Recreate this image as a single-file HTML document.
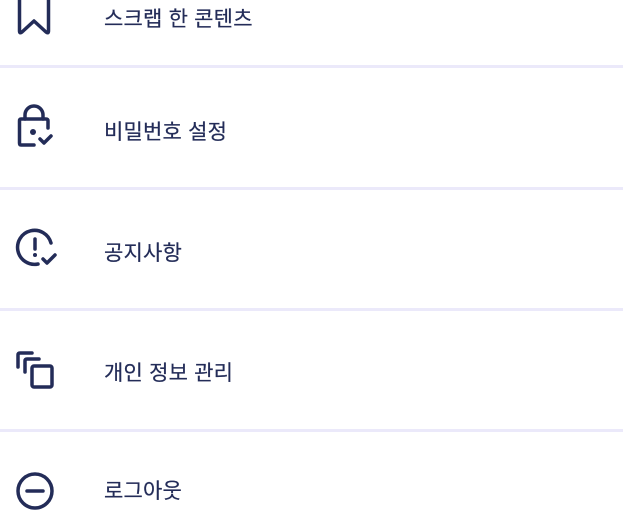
<html><head><style>
body{margin:0;width:623px;height:512px;background:#fff;position:relative;overflow:hidden;font-family:"Liberation Sans","Noto Sans CJK KR",sans-serif;color:#232c58}
.d{position:absolute;left:0;width:623px;height:3px;background:#ebe9fa}
.t{position:absolute;left:104px;font-size:21px;line-height:26px;letter-spacing:0.2px;-webkit-text-stroke:0.2px #232c58}
svg{position:absolute;left:0;top:0}
</style></head><body>
<div class="d" style="top:65px"></div>
<div class="d" style="top:187px"></div>
<div class="d" style="top:308px"></div>
<div class="d" style="top:429px"></div>
<div class="t" style="top:7px">스크랩 한 콘텐츠</div>
<div class="t" style="top:120px">비밀번호 설정</div>
<div class="t" style="top:241px">공지사항</div>
<div class="t" style="top:361px">개인 정보 관리</div>
<div class="t" style="top:479px">로그아웃</div>
<svg width="623" height="512" fill="none" stroke="#232c58" stroke-width="3.5" stroke-linecap="round" stroke-linejoin="round">
<path d="M19.5 -2 V31 Q19.5 34 22 32 L34 21 L46 32 Q48.5 34 48.5 31 V-2"/>
<path d="M25 119 V115 a9 9 0 0 1 18 0 V119"/>
<path d="M48 128 V121 Q48 119 46 119 H21 Q19.5 119 19.5 121 V143 Q19.5 145 21 145 H34"/>
<circle cx="33" cy="132" r="3" fill="#232c58" stroke="none"/>
<path d="M40 139 L44 143 L51 136"/>
<path d="M51 243 A17 17 0 1 0 38 264"/>
<path d="M35 239 V249"/>
<circle cx="35" cy="255" r="2" fill="#232c58" stroke="none"/>
<path d="M43 259 L47 263 L55 255"/>
<path d="M18 367 V355 Q18 353 20 353 H32"/>
<path d="M25 372 V361 Q25 359 27 359 H39"/>
<rect x="32" y="366" width="20" height="21" rx="2"/>
<circle cx="35" cy="491" r="17"/>
<path d="M27 491 H43"/>
</svg>
</body></html>
